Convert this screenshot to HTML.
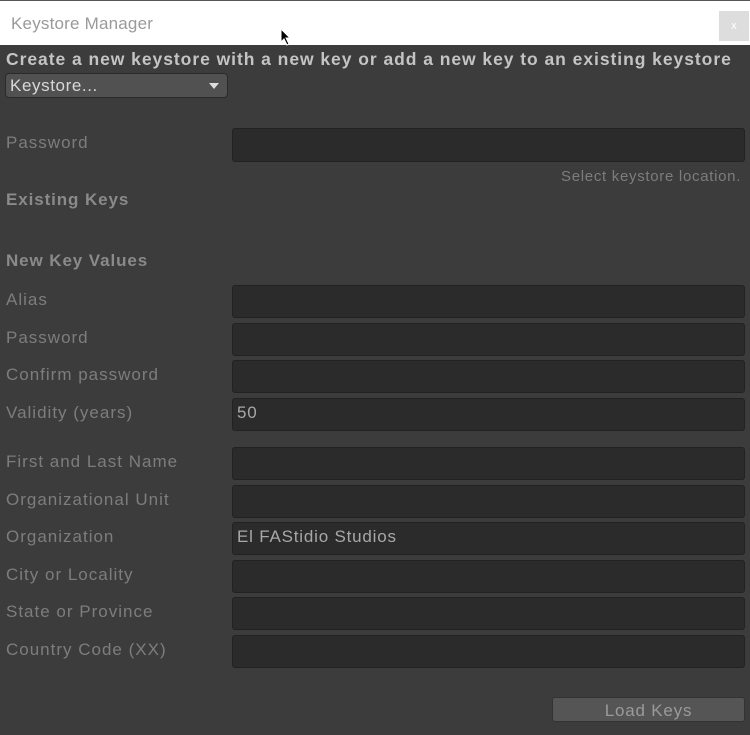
<!DOCTYPE html>
<html><head><style>
body{margin:0;width:750px;height:735px;background:#3c3c3c;font-family:"Liberation Sans",sans-serif;position:relative;overflow:hidden}
.t{position:absolute;white-space:nowrap}
.f{position:absolute;left:232px;width:513px;height:33px;background:#2b2b2b;border:1px solid #222;border-radius:3px;box-sizing:border-box}
.l{position:absolute;left:6px;font-size:17px;color:#7d7d7d;letter-spacing:1px;white-space:nowrap}
.v{position:absolute;left:237px;font-size:17px;color:#a8a8a8;letter-spacing:0.8px}
</style></head><body>
<div style="position:absolute;left:0;top:0;width:750px;height:45px;background:#fff;border-top:1px solid #555;box-sizing:border-box"></div>
<div class="t" style="left:11px;top:14px;font-size:17px;color:#9a9a9a;letter-spacing:0.2px">Keystore Manager</div>
<div style="position:absolute;left:719px;top:11px;width:30px;height:30px;background:#ddd;color:#fff;font-size:11px;text-align:center;line-height:30px">x</div>
<svg style="position:absolute;left:280px;top:28px" width="12" height="18"><path d="M1 1 L1 14 L4 11 L7 17 L9 16 L6 10 L10 10 Z" fill="#000" stroke="#fff" stroke-width="1"/></svg>
<div class="t" style="left:6px;top:49px;font-size:17.5px;font-weight:bold;color:#c4c4c4;letter-spacing:0.95px">Create a new keystore with a new key or add a new key to an existing keystore</div>
<div style="position:absolute;left:5px;top:73px;width:223px;height:25px;background:#515151;border:1px solid #2a2a2a;border-radius:4px;box-sizing:border-box"></div>
<div class="t" style="left:10px;top:76px;font-size:17px;color:#d8d8d8;letter-spacing:0.6px">Keystore...</div>
<div style="position:absolute;left:209px;top:83px;width:0;height:0;border-left:5px solid transparent;border-right:5px solid transparent;border-top:6px solid #ddd"></div>
<div class="l" style="top:133px">Password</div><div class="f" style="top:128px;height:34px"></div>
<div class="t" style="left:561px;top:168px;font-size:15px;color:#7d7d7d;letter-spacing:0.7px">Select keystore location.</div>
<div class="t" style="left:6px;top:190px;font-size:17px;font-weight:bold;color:#8a8a8a;letter-spacing:0.9px">Existing Keys</div>
<div class="t" style="left:6px;top:251px;font-size:17px;font-weight:bold;color:#8a8a8a;letter-spacing:0.9px">New Key Values</div>
<div class="l" style="top:290px">Alias</div><div class="f" style="top:285px"></div>
<div class="l" style="top:328px">Password</div><div class="f" style="top:323px"></div>
<div class="l" style="top:365px">Confirm password</div><div class="f" style="top:360px"></div>
<div class="l" style="top:403px">Validity (years)</div><div class="f" style="top:398px"></div><div class="v" style="top:403px">50</div>
<div class="l" style="top:452px">First and Last Name</div><div class="f" style="top:447px"></div>
<div class="l" style="top:490px">Organizational Unit</div><div class="f" style="top:485px"></div>
<div class="l" style="top:527px">Organization</div><div class="f" style="top:522px"></div><div class="v" style="top:527px">El FAStidio Studios</div>
<div class="l" style="top:565px">City or Locality</div><div class="f" style="top:560px"></div>
<div class="l" style="top:602px">State or Province</div><div class="f" style="top:597px"></div>
<div class="l" style="top:640px">Country Code (XX)</div><div class="f" style="top:635px"></div>
<div style="position:absolute;left:552px;top:697px;width:193px;height:25px;background:#555;border:1px solid #333;border-radius:3px;box-sizing:border-box;text-align:center;font-size:17px;line-height:25px;color:#9a9a9a;letter-spacing:0.8px">Load Keys</div>
</body></html>
